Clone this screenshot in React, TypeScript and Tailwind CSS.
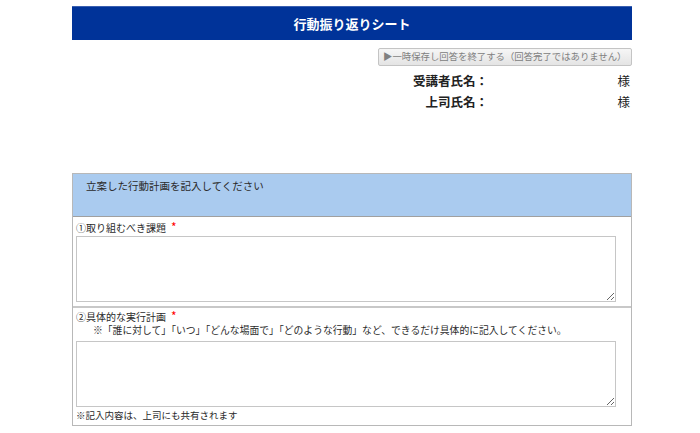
const font = {
  fontFamily: '"Noto Sans CJK JP", "Noto Sans", sans-serif',
};

function Required() {
  return <span className="ml-[5px] text-[12px] leading-none text-[#ff0000]">*</span>;
}

export default function App() {
  return (
    <div className="min-h-[433px] bg-white text-[#333]" style={font}>
      <div className="ml-[72px] w-[560px] pt-[6px]">
        {/* Title bar */}
        <div className="flex h-[34px] items-center justify-center border-t border-[#3a5fb0] bg-[#003399] text-[13px] font-bold text-white">
          行動振り返りシート
        </div>

        {/* Save button */}
        <div className="mt-[8px] flex justify-end">
          <button className="h-[18px] w-[254px] whitespace-nowrap rounded-[2px] border border-[#c4c4c4] bg-gradient-to-b from-[#f6f6f6] to-[#e4e4e4] px-[4px] text-left text-[9.4px] leading-none text-[#808080]">
            ▶一時保存し回答を終了する（回答完了ではありません）
          </button>
        </div>

        {/* Names */}
        <div className="mt-[4px] grid grid-cols-[416px_1fr] text-[12.5px] leading-[21px] text-[#222]">
          <div className="text-right font-bold">受講者氏名：</div>
          <div className="pr-[2px] text-right">様</div>
          <div className="text-right font-bold">上司氏名：</div>
          <div className="pr-[2px] text-right">様</div>
        </div>

        {/* Plan section */}
        <div className="mt-[61px] border border-[#b8b8b8]">
          <div className="h-[43px] border-b border-[#a0a0a0] bg-[#aacbef] px-[13px] pt-[5px] text-[10.5px] leading-[14px] text-[#2a2a2a]">
            立案した行動計画を記入してください
          </div>

          <div className="border-b-2 border-[#c8c8c8] px-[3px] pt-[4px] pb-[4px]">
            <div className="text-[10px] leading-[14px] text-[#2a2a2a]">
              ①取り組むべき課題
              <Required />
            </div>
            <textarea className="mt-[1px] block h-[66px] w-[540px] resize border border-[#c6c6c6] bg-white outline-none" />
          </div>

          <div className="px-[3px] pt-[2px] pb-[3px]">
            <div className="text-[10px] leading-[14px] text-[#2a2a2a]">
              ②具体的な実行計画
              <Required />
            </div>
            <div className="pl-[17px] text-[9.8px] leading-[13px] text-[#2a2a2a]">
              ※「誰に対して」「いつ」「どんな場面で」「どのような行動」など、できるだけ具体的に記入してください。
            </div>
            <textarea className="mt-[4px] block h-[66px] w-[540px] resize border border-[#c6c6c6] bg-white outline-none" />
            <div className="mt-[1px] text-[9.5px] leading-[14px] text-[#2a2a2a]">
              ※記入内容は、上司にも共有されます
            </div>
          </div>
        </div>
      </div>
    </div>
  );
}
